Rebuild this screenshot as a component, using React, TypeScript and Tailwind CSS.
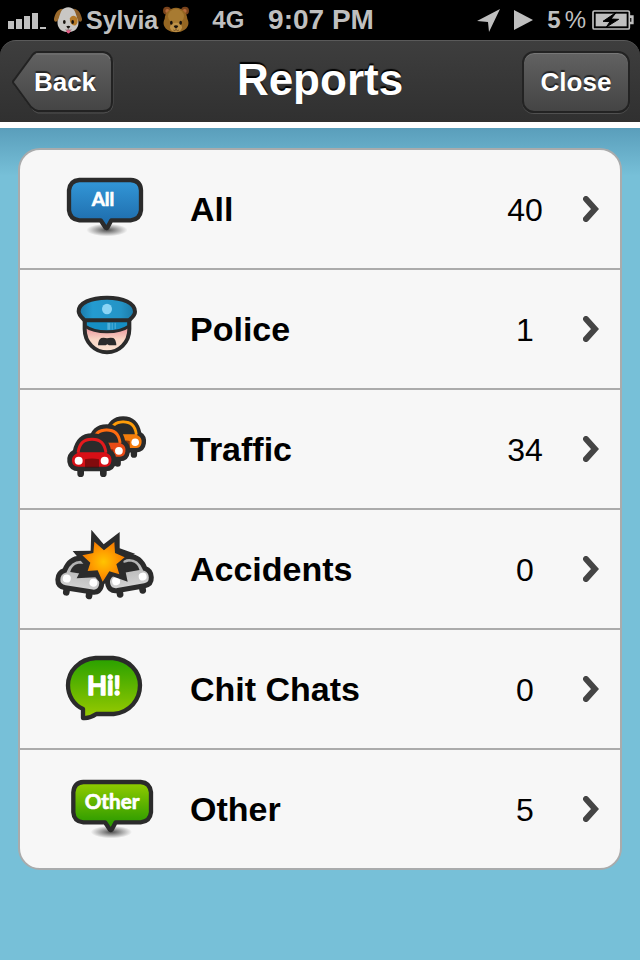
import React from 'react';
import clsx from 'clsx';

interface Report {
  name: string;
  count: number;
  icon: React.ReactNode;
}

const INK = '#2b2b2b';

function ReportIcon({ children }: { children: React.ReactNode }) {
  return (
    <svg viewBox="0 12 330 240" className="w-[110px] h-20" aria-hidden="true">
      {children}
    </svg>
  );
}

function AllIcon() {
  return (
    <ReportIcon>
      <defs>
        <linearGradient id="allFill" x1="0" y1="0" x2="0" y2="1">
          <stop offset="0" stopColor="#3398d8" />
          <stop offset="1" stopColor="#1c68a8" />
        </linearGradient>
        <radialGradient id="allShade">
          <stop offset="0" stopColor="#333" stopOpacity="0.85" />
          <stop offset="1" stopColor="#333" stopOpacity="0" />
        </radialGradient>
      </defs>
      <ellipse cx="171" cy="195" rx="62" ry="19" fill="url(#allShade)" />
      <path
        d="M88 45H242Q272 47 273 76V136Q270 164 242 166H184L172 188Q170 190 167 188L152 166H88Q60 164 57 136V76Q60 47 88 45Z"
        fill="url(#allFill)"
        stroke={INK}
        strokeWidth="13"
        strokeLinejoin="round"
      />
      <text x="159" y="122" textAnchor="middle" fill="#fff" stroke="#fff" strokeWidth="2" strokeLinejoin="round" className="font-[Lato,sans-serif] text-[57px] font-bold">
        All
      </text>
    </ReportIcon>
  );
}

function PoliceIcon() {
  return (
    <ReportIcon>
      <defs>
        <linearGradient id="capFill" x1="0" y1="0" x2="1" y2="0">
          <stop offset="0" stopColor="#1b78a8" />
          <stop offset="0.25" stopColor="#249bd0" />
          <stop offset="0.75" stopColor="#2494c6" />
          <stop offset="1" stopColor="#1c78a4" />
        </linearGradient>
        <linearGradient id="skin" x1="0" y1="0" x2="0" y2="1">
          <stop offset="0.2" stopColor="#e98f98" />
          <stop offset="0.6" stopColor="#f8d5c4" />
          <stop offset="1" stopColor="#fbe3d2" />
        </linearGradient>
      </defs>
      <g transform="translate(30 0)">
        <path d="M74 105V132C74 174 106 202 141 202S208 174 208 132V105Z" fill="url(#skin)" stroke={INK} strokeWidth="12" />
        <path d="M76 106H206V124C176 146 106 146 76 124Z" fill="#168fc4" stroke={INK} strokeWidth="9" />
        <path d="M142 113H151V134H142ZM155 113H158V134H155ZM164 113H167V132H164Z" fill="#68bce0" opacity="0.75" />
        <path
          d="M141 38C190 38 225 55 225 80C225 92 214 99 207 106H74C66 98 56 91 56 79C56 54 92 38 141 38Z"
          fill="url(#capFill)"
          stroke={INK}
          strokeWidth="12"
          strokeLinejoin="round"
        />
        <ellipse cx="141" cy="72" rx="15" ry="16" fill="#8bd5f5" />
        <path d="M124 159Q133 157 141 160Q150 157 160 159Q168 163 169 181H147L142 178L137 181H114Q115 163 124 159Z" fill={INK} />
      </g>
    </ReportIcon>
  );
}

interface CarProps {
  transform: string;
  body: string;
  shade: string;
}

function Car({ transform, body, shade }: CarProps) {
  return (
    <g transform={transform}>
      <path d="M37 112V122M105 112V122" stroke={INK} strokeWidth="20" strokeLinecap="round" />
      <path
        d="M20 56C27 22 44 8 71 8S115 22 122 56C133 62 138 72 136 86C134 101 125 108 112 108H30C17 108 6 101 4 86C2 72 9 62 20 56Z"
        fill={body}
        stroke={INK}
        strokeWidth="14"
      />
      <path d="M25 58C29 27 44 14 71 14S113 27 117 58Z" fill={shade} />
      <path d="M34 58C37 34 49 23 71 23S105 34 108 58Z" fill={INK} />
      <path d="M50 79Q71 74 92 79V104H50Z" fill="#4a0808" opacity="0.6" />
      <circle cx="31" cy="83" r="12" fill="#fff" />
      <circle cx="109" cy="83" r="12" fill="#fff" />
    </g>
  );
}

function TrafficIcon() {
  return (
    <ReportIcon>
      <g transform="translate(15 0)">
        <Car transform="translate(137 33) scale(.95)" body="#f57c0c" shade="#ff9c08" />
        <Car transform="translate(86 57) scale(.97)" body="#e94a16" shade="#ff6c10" />
        <Car transform="translate(40 84)" body="#d70f16" shade="#e31a1d" />
      </g>
    </ReportIcon>
  );
}

function WreckedCar({ transform }: { transform: string }) {
  return (
    <g transform={transform}>
      <path d="M34 112V120M103 112V120" stroke={INK} strokeWidth="20" strokeLinecap="round" />
      <path
        d="M19 56C26 26 43 12 70 12S114 26 121 56C132 62 137 72 135 86C133 101 124 107 111 107H29C16 107 5 101 3 86C1 72 8 62 19 56Z"
        fill="url(#silver)"
        stroke={INK}
        strokeWidth="15"
      />
      <path d="M36 58C39 37 50 28 70 28S101 37 104 58Z" fill={INK} />
      <circle cx="29" cy="79" r="12" fill="#fff" />
      <circle cx="110" cy="79" r="12" fill="#fff" />
    </g>
  );
}

function AccidentIcon() {
  return (
    <ReportIcon>
      <defs>
        <linearGradient id="silver" x1="0" y1="0" x2="0" y2="1">
          <stop offset="0" stopColor="#aaa" />
          <stop offset="1" stopColor="#d4d4d4" />
        </linearGradient>
        <radialGradient id="blast">
          <stop offset="0" stopColor="#ffc400" />
          <stop offset="0.5" stopColor="#ffa000" />
          <stop offset="1" stopColor="#f57c00" />
        </radialGradient>
      </defs>
      <WreckedCar transform="translate(34 78) rotate(9)" />
      <WreckedCar transform="translate(156 96) rotate(-10)" />
      <path
        d="M124 14L161 58L209 21V70L255 86L220 108L233 170L185 153L158 182L136 157L80 160L101 118L68 78L122 77Z"
        fill={INK}
      />
      <path
        d="M133 50L162 76L193 51L195 84L224 97L199 118L208 148L178 139L158 170L143 136L113 138L121 113L97 91L130 84Z"
        fill="url(#blast)"
      />
    </ReportIcon>
  );
}

function ChatIcon() {
  return (
    <ReportIcon>
      <defs>
        <linearGradient id="chatFill" x1="0" y1="0" x2="0" y2="1">
          <stop offset="0" stopColor="#28a000" />
          <stop offset="1" stopColor="#9acb00" />
        </linearGradient>
      </defs>
      <g transform="translate(15 0)">
        <path
          d="M122 39H174C222 44 255 78 255 121C255 164 225 202 176 207H124Q104 221 84 219V192C57 180 39 153 39 121C39 77 73 43 122 39Z"
          fill="url(#chatFill)"
          stroke={INK}
          strokeWidth="13"
          strokeLinejoin="round"
        />
        <text x="147" y="149" textAnchor="middle" fill="#fff" stroke="#fff" strokeWidth="4" strokeLinejoin="round" className="font-[Lato,sans-serif] text-[78px] font-bold">
          Hi!
        </text>
      </g>
    </ReportIcon>
  );
}

function OtherIcon() {
  return (
    <ReportIcon>
      <defs>
        <linearGradient id="otherFill" x1="0" y1="0" x2="0" y2="1">
          <stop offset="0" stopColor="#94cd00" />
          <stop offset="0.85" stopColor="#2e9c00" />
        </linearGradient>
        <radialGradient id="otherShade">
          <stop offset="0" stopColor="#333" stopOpacity="0.85" />
          <stop offset="1" stopColor="#333" stopOpacity="0" />
        </radialGradient>
      </defs>
      <g transform="translate(30 0)">
        <ellipse cx="154" cy="201" rx="62" ry="19" fill="url(#otherShade)" />
        <path
          d="M70 51H242Q270 53 273 82V142Q270 170 242 172H167L155 194Q153 197 150 194L135 172H70Q42 170 40 142V82Q42 53 70 51Z"
          fill="url(#otherFill)"
          stroke={INK}
          strokeWidth="13"
          strokeLinejoin="round"
        />
        <text x="156" y="131" textAnchor="middle" fill="#fff" stroke="#fff" strokeWidth="2" strokeLinejoin="round" className="font-[Lato,sans-serif] text-[62px] font-bold">
          Other
        </text>
      </g>
    </ReportIcon>
  );
}

function DogFace() {
  return (
    <svg viewBox="0 0 84 84" className="w-7 h-7" aria-hidden="true">
      <path d="M20 14C34 0 52 0 64 14C72 26 76 46 72 60C66 74 56 78 42 78S18 74 12 60C8 46 12 26 20 14Z" fill="#c9c7c4" />
      <path d="M26 8C10 8 3 24 0 38C-1 45 4 50 9 46C16 39 15 25 26 8Z" fill="#9b6a2c" />
      <path d="M58 8C74 8 81 24 84 38C85 45 80 50 75 46C68 39 69 25 58 8Z" fill="#8d5f28" />
      <path d="M48 37C51 27 65 26 70 38C73 50 67 61 58 58C51 55 46 47 48 37Z" fill="#b57a28" />
      <ellipse cx="31" cy="48" rx="4" ry="6" fill="#17110c" />
      <ellipse cx="56" cy="48" rx="4" ry="6" fill="#17110c" />
      <path d="M37 71H50V76Q43 89 37 76Z" fill="#e35d86" />
      <path d="M37 61Q43 58 49 61Q47 67 43 68Q39 67 37 61Z" fill="#17110c" />
      <path d="M43 67V71M34 71Q39 75 43 71Q48 75 53 71" fill="none" stroke="#7a706a" strokeWidth="2" />
    </svg>
  );
}

function BearFace() {
  return (
    <svg viewBox="0 0 84 84" className="w-7 h-7" aria-hidden="true">
      <circle cx="15" cy="14" r="12" fill="#79431b" />
      <circle cx="69" cy="14" r="12" fill="#79431b" />
      <circle cx="16" cy="15" r="6" fill="#b56b3c" />
      <circle cx="68" cy="15" r="6" fill="#b56b3c" />
      <path d="M42 5C61 5 75 20 76 38C88 62 66 79 42 79S-4 62 8 38C9 20 23 5 42 5Z" fill="#956622" />
      <ellipse cx="42" cy="31" rx="24" ry="22" fill="#a87b32" />
      <ellipse cx="42" cy="64" rx="18" ry="14" fill="#be9248" />
      <ellipse cx="28" cy="50" rx="4" ry="6" fill="#17110c" />
      <ellipse cx="56" cy="50" rx="4" ry="6" fill="#17110c" />
      <path d="M35 60Q42 56 49 60Q47 66 42 67Q37 66 35 60Z" fill="#17110c" />
      <path d="M42 66V71M34 72Q39 76 42 71Q46 76 51 72" fill="none" stroke="#5a3a1a" strokeWidth="2" />
    </svg>
  );
}

function StatusBar() {
  return (
    <div className="flex items-center h-10 pl-2 pr-1.5 bg-black text-[#bfbfbf] font-bold leading-10">
      <div className="flex flex-1 items-center">
        <svg viewBox="0 0 38 17" className="w-[38px] h-[17px] mr-2" fill="currentColor" aria-label="Signal strength">
          <path d="M0 9H6V17H0ZM8 7H14V17H8ZM16 4H22V17H16ZM24 1H30V17H24ZM32 15H38V17H32Z" />
        </svg>
        <DogFace />
        <span className="ml-1 text-[25px]">Sylvia</span>
        <span className="ml-1">
          <BearFace />
        </span>
        <span className="ml-[22px] text-2xl leading-10">4G</span>
      </div>
      <span className="text-[28px]">9:07 PM</span>
      <div className="flex flex-1 items-center justify-end">
        <svg viewBox="0 0 23 23" className="w-[23px] h-[23px] mr-3.5" fill="currentColor" aria-hidden="true">
          <path d="M23 0L12 23L11 13L0 12Z" />
        </svg>
        <svg viewBox="0 0 19 22" className="w-[19px] h-[22px] mr-3.5" fill="currentColor" aria-hidden="true">
          <path d="M0 1L19 11L0 21Z" />
        </svg>
        <span className="text-2xl leading-10">5</span>
        <span className="ml-1 mr-1.5 text-2xl leading-10 font-normal">%</span>
        <svg viewBox="0 0 126 60" className="w-[42px] h-5" aria-label="Battery charging">
          <rect x="3" y="3" width="109" height="54" rx="4" fill="none" stroke="currentColor" strokeWidth="5" />
          <rect x="11" y="11" width="93" height="38" fill="currentColor" />
          <path d="M114 16H125V43H114V35H118V24H114Z" fill="currentColor" />
          <path d="M73 7L33 34L54 35L43 51L80 28L57 27Z" fill="#000" stroke="#000" strokeWidth="3" />
        </svg>
      </div>
    </div>
  );
}

function Header() {
  return (
    <div className="bg-black">
      <header className="grid grid-cols-[1fr_auto_1fr] items-center h-[82px] px-2.5 rounded-t-[16px] border-t border-[#5a5a5a] bg-linear-to-b from-[#3e3e3e] to-[#303030] text-white">
        <button type="button" className="relative justify-self-start ml-0.5 w-[102px] h-16 pl-1 pt-0.5 text-[26px] font-bold [text-shadow:0_-2px_1px_rgba(0,0,0,0.6)]">
          <svg viewBox="0 0 102 64" className="absolute inset-0 w-full h-full" aria-hidden="true">
            <defs>
              <linearGradient id="backFill" x1="0" y1="0" x2="0" y2="1">
                <stop offset="0" stopColor="#626262" />
                <stop offset="1" stopColor="#444" />
              </linearGradient>
            </defs>
            <path d="M26 3H92Q101 4 101 13V53Q101 62 92 63H26Q22 62 19 58L2 35Q0 33 2 31L19 8Q22 3 26 3Z" fill="none" stroke="#505050" />
            <path d="M26 2H91Q100 3 100 12V52Q100 61 91 61H26Q22 60 19 57L2 34Q0 32 2 30L19 7Q22 2 26 2Z" fill="url(#backFill)" stroke="#222" strokeWidth="2" />
            <path d="M24 4H90Q96 4 98 9" fill="none" stroke="#777" />
          </svg>
          <span className="relative">Back</span>
        </button>
        <h1 className="text-[44px] leading-[76px] pb-1 font-bold [text-shadow:0_-2px_1px_#000]">Reports</h1>
        <button
          type="button"
          className="justify-self-end w-[108px] h-[62px] pt-0.5 rounded-xl border-2 border-[#232323] bg-linear-to-b from-[#626262] to-[#444] text-[26px] font-bold shadow-[inset_0_1px_0_#777,0_1px_0_#505050] [text-shadow:0_-2px_1px_rgba(0,0,0,0.6)]"
        >
          Close
        </button>
      </header>
    </div>
  );
}

const reports: Report[] = [
  { name: 'All', count: 40, icon: <AllIcon /> },
  { name: 'Police', count: 1, icon: <PoliceIcon /> },
  { name: 'Traffic', count: 34, icon: <TrafficIcon /> },
  { name: 'Accidents', count: 0, icon: <AccidentIcon /> },
  { name: 'Chit Chats', count: 0, icon: <ChatIcon /> },
  { name: 'Other', count: 5, icon: <OtherIcon /> },
];

export default function App() {
  return (
    <div className="flex flex-col min-h-screen bg-[#77c0d8] font-['Liberation_Sans',Arial,sans-serif]">
      <StatusBar />
      <Header />
      <main className="flex-1 border-t-6 border-white bg-linear-to-b from-[#5a9ebb] to-[#77c0d8] to-[48px] px-[18px] pt-5 pb-10">
        <ul className="overflow-hidden rounded-[22px] border-2 border-[#a9abac] bg-[#f7f7f7]">
          {reports.map((report, index) => (
            <li key={report.name} className={clsx(index > 0 && 'border-t-2 border-[#ababab]')}>
              <button type="button" className="flex items-center w-full h-[118px] text-black">
                <span className="flex justify-center w-[170px]">{report.icon}</span>
                <span className="flex-1 text-left text-[34px] font-bold">{report.name}</span>
                <span className="w-[90px] pt-0.5 text-center text-[32px]">{report.count}</span>
                <svg viewBox="0 0 16 26" className="w-4 h-[26px] ml-[13px] mr-[21px]" fill="none" stroke="#444" aria-hidden="true">
                  <path d="M3 3L12 13L3 23" strokeWidth="6" strokeLinecap="round" />
                </svg>
              </button>
            </li>
          ))}
        </ul>
      </main>
    </div>
  );
}
